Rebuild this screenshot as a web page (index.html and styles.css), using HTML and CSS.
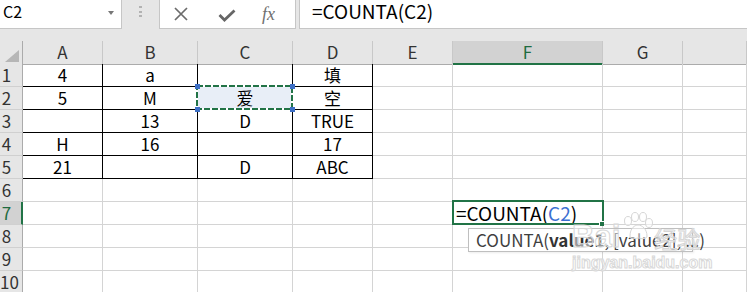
FILE: index.html
```html
<!DOCTYPE html>
<html lang="zh-CN">
<head>
    <meta charset="UTF-8">
    <title>COUNTA</title>
    <link rel="stylesheet" href="styles.css">
</head>
<body>
    <!-- formula bar -->
    <div class="formula-bar">
        <div class="name-box"><span>C2</span><span class="caret"></span></div>
        <div class="grip"><i></i><i></i><i></i></div>
        <div class="buttons">
            <svg class="btn-cancel" width="16" height="14" viewBox="0 0 16 14"><path d="M2 1 L14 13 M14 1 L2 13" stroke="#6b6b6b" stroke-width="1.7" fill="none"/></svg>
            <svg class="btn-enter" width="18" height="13" viewBox="0 0 18 13"><path d="M1.5 6 L6.5 11 L16.5 1.5" stroke="#666" stroke-width="2.8" fill="none"/></svg>
            <span class="fx">fx</span>
        </div>
        <div class="input">=COUNTA(C2)</div>
    </div>

    <!-- sheet -->
    <div class="sheet">
        <div class="row">
            <div class="corner"><span class="tri"></span></div>
            <div class="ch">A</div>
            <div class="ch">B</div>
            <div class="ch">C</div>
            <div class="ch">D</div>
            <div class="ch">E</div>
            <div class="ch sel">F</div>
            <div class="ch">G</div>
            <div class="ch"></div>
        </div>
        <div class="row">
            <div class="rh">1</div>
            <div class="cell blk">4</div>
            <div class="cell blk">a</div>
            <div class="cell blk"></div>
            <div class="cell blk">填</div>
            <div class="cell"></div><div class="cell"></div><div class="cell"></div><div class="cell"></div>
        </div>
        <div class="row">
            <div class="rh">2</div>
            <div class="cell blk">5</div>
            <div class="cell blk">M</div>
            <div class="cell blk ref">爱
                <svg class="marquee" width="98" height="26" viewBox="0 0 98 26">
                    <rect x="1" y="1" width="95" height="23" fill="none" stroke="#fff" stroke-width="2"/>
                    <rect x="1" y="1" width="95" height="23" fill="none" stroke="#217346" stroke-width="2" stroke-dasharray="6 2"/>
                    <rect x="-1" y="-1" width="5" height="5" fill="#3d6fc5"/>
                    <rect x="94" y="-1" width="5" height="5" fill="#3d6fc5"/>
                    <rect x="-1" y="22" width="5" height="5" fill="#3d6fc5"/>
                    <rect x="94" y="22" width="5" height="5" fill="#3d6fc5"/>
                </svg>
            </div>
            <div class="cell blk">空</div>
            <div class="cell"></div><div class="cell"></div><div class="cell"></div><div class="cell"></div>
        </div>
        <div class="row">
            <div class="rh">3</div>
            <div class="cell blk"></div>
            <div class="cell blk">13</div>
            <div class="cell blk">D</div>
            <div class="cell blk">TRUE</div>
            <div class="cell"></div><div class="cell"></div><div class="cell"></div><div class="cell"></div>
        </div>
        <div class="row">
            <div class="rh">4</div>
            <div class="cell blk">H</div>
            <div class="cell blk">16</div>
            <div class="cell blk"></div>
            <div class="cell blk">17</div>
            <div class="cell"></div><div class="cell"></div><div class="cell"></div><div class="cell"></div>
        </div>
        <div class="row">
            <div class="rh">5</div>
            <div class="cell blk">21</div>
            <div class="cell blk"></div>
            <div class="cell blk">D</div>
            <div class="cell blk">ABC</div>
            <div class="cell"></div><div class="cell"></div><div class="cell"></div><div class="cell"></div>
        </div>
        <div class="row">
            <div class="rh">6</div>
            <div class="cell"></div><div class="cell"></div><div class="cell"></div><div class="cell"></div>
            <div class="cell"></div><div class="cell"></div><div class="cell"></div><div class="cell"></div>
        </div>
        <div class="row">
            <div class="rh sel">7</div>
            <div class="cell"></div><div class="cell"></div><div class="cell"></div><div class="cell"></div>
            <div class="cell"></div>
            <div class="cell active">=COUNTA(<span class="ref-text">C2</span>)
                <div class="frame"></div>
                <div class="handle"></div>
                <div class="tooltip">COUNTA(<b>value1</b>, [value2], ...)</div>
            </div>
            <div class="cell"></div><div class="cell"></div>
        </div>
        <div class="row">
            <div class="rh">8</div>
            <div class="cell"></div><div class="cell"></div><div class="cell"></div><div class="cell"></div>
            <div class="cell"></div><div class="cell"></div><div class="cell"></div><div class="cell"></div>
        </div>
        <div class="row">
            <div class="rh">9</div>
            <div class="cell"></div><div class="cell"></div><div class="cell"></div><div class="cell"></div>
            <div class="cell"></div><div class="cell"></div><div class="cell"></div><div class="cell"></div>
        </div>
        <div class="row">
            <div class="rh">10</div>
            <div class="cell"></div><div class="cell"></div><div class="cell"></div><div class="cell"></div>
            <div class="cell"></div><div class="cell"></div><div class="cell"></div><div class="cell"></div>
        </div>
    </div>

    <!-- watermark over the sheet -->
    <div class="watermark">
        <div class="wm-top">
            <span class="wm-bai">Bai</span>
            <svg class="wm-paw" width="34" height="28" viewBox="0 0 34 28">
                <ellipse cx="8" cy="9" rx="3.5" ry="4.5"/>
                <ellipse cx="15" cy="5" rx="3.5" ry="4.5"/>
                <ellipse cx="23" cy="5" rx="3.5" ry="4.5"/>
                <ellipse cx="29" cy="11" rx="3.5" ry="4.5"/>
                <path d="M10 24 C10 16 15 13 18 13 C22 13 27 17 27 24 C27 27 22 27 18 26 C14 27 10 27 10 24 Z"/>
            </svg>
            <span class="wm-cn">经验</span>
        </div>
        <div class="wm-url">jingyan.baidu.com</div>
    </div>
</body>
</html>
```

FILE: styles.css
```css
body {
    margin: 0;
    width: 747px;
    height: 292px;
    overflow: hidden;
    position: relative;
    background-color: #ffffff;
    font-family: "Noto Sans CJK SC", "Noto Sans", sans-serif;
    color: #000;
}

/* formula bar */
.formula-bar {
    display: flex;
    align-items: flex-start;
    height: 41px;
    background-color: #e6e6e6;
}

.name-box {
    width: 122px;
    height: 29px;
    box-sizing: border-box;
    display: flex;
    justify-content: space-between;
    padding: 0 7px 0 3px;
    background-color: #fff;
    border-right: 1px solid #c6c6c6;
    border-bottom: 1px solid #c6c6c6;
    font-size: 16px;
    line-height: 22px;
}

.caret {
    width: 0;
    height: 0;
    margin-top: 11px;
    border-left: 3.5px solid transparent;
    border-right: 3.5px solid transparent;
    border-top: 4px solid #777;
}

.grip {
    width: 37px;
    display: flex;
    flex-direction: column;
    align-items: center;
    gap: 2.5px;
    padding-top: 6px;
}

.grip i {
    width: 3px;
    height: 2px;
    background-color: #b2b2b2;
}

.buttons {
    width: 137px;
    height: 29px;
    box-sizing: border-box;
    display: flex;
    align-items: center;
    background-color: #fff;
    border-left: 1px solid #c6c6c6;
    border-right: 1px solid #c6c6c6;
    border-bottom: 1px solid #c6c6c6;
}

.btn-cancel {
    margin-left: 13px;
}

.btn-enter {
    margin-left: 29px;
    margin-top: 2px;
}

.fx {
    margin-left: 26px;
    font-family: "Liberation Serif", serif;
    font-style: italic;
    font-size: 18px;
    color: #707070;
}

.input {
    flex: 1;
    height: 29px;
    box-sizing: border-box;
    margin-left: 3px;
    padding-left: 12px;
    background-color: #fff;
    border-left: 1px solid #c6c6c6;
    border-bottom: 1px solid #c6c6c6;
    font-size: 19px;
    line-height: 22px;
}

/* sheet grid */
.row {
    display: grid;
    grid-template-columns: 23px 80px 95px 95px 80px 80px 150px 80px 1fr;
    height: 23px;
}

.row > div {
    box-sizing: border-box;
}

.corner {
    display: flex;
    justify-content: flex-end;
    align-items: flex-end;
    padding: 0 3px 2px 0;
    background-color: #e6e6e6;
    border-right: 1px solid #ababab;
    border-bottom: 1px solid #ababab;
}

.tri {
    width: 0;
    height: 0;
    border-left: 14px solid transparent;
    border-bottom: 12px solid #b6b6b6;
}

.ch {
    background-color: #e6e6e6;
    border-right: 1px solid #c8c8c8;
    border-bottom: 1px solid #ababab;
    text-align: center;
    font-size: 17px;
    line-height: 22px;
    color: #333;
}

.ch.sel {
    background-color: #d2d2d2;
    border-bottom: 2px solid #217346;
    color: #1f6b40;
}

.rh {
    padding-right: 9px;
    background-color: #e6e6e6;
    border-right: 1px solid #ababab;
    border-bottom: 1px solid #d0d0d0;
    text-align: center;
    font-size: 17px;
    line-height: 22px;
    color: #333;
}

.rh.sel {
    padding-right: 8px;
    background-color: #d2d2d2;
    border-right: 2px solid #217346;
    color: #1f6b40;
}

.cell {
    border-right: 1px solid #d4d4d4;
    border-bottom: 1px solid #d4d4d4;
    text-align: center;
    white-space: nowrap;
    font-size: 17px;
    line-height: 22px;
}

.cell.blk {
    border-right-color: #000;
    border-bottom-color: #000;
}

/* referenced cell C2 */
.ref {
    position: relative;
    background-color: #e8eef7;
}

.marquee {
    position: absolute;
    left: -2px;
    top: -2px;
    overflow: visible;
}

/* cell being edited */
.active {
    position: relative;
    padding-left: 3px;
    text-align: left;
    font-size: 19px;
}

.ref-text {
    color: #3b6fd1;
}

.frame {
    position: absolute;
    left: -1px;
    top: -2px;
    right: -2px;
    bottom: -1px;
    border: 2px solid #217346;
}

.handle {
    position: absolute;
    right: -2px;
    bottom: -2px;
    width: 4px;
    height: 4px;
    background-color: #217346;
    border-left: 1px solid #fff;
    border-top: 1px solid #fff;
}

.tooltip {
    position: absolute;
    left: 15px;
    top: 26px;
    width: 225px;
    height: 24px;
    box-sizing: border-box;
    padding-left: 7px;
    background-color: #fff;
    border: 1px solid #bfbfbf;
    box-shadow: 1px 1px 2px rgba(0, 0, 0, 0.08);
    font-size: 17px;
    line-height: 22px;
    color: #404040;
    z-index: 3;
}

.tooltip b {
    color: #333;
}

/* watermark */
.watermark {
    position: absolute;
    left: 572px;
    top: 208px;
    z-index: 5;
    pointer-events: none;
}

.wm-top {
    display: flex;
    align-items: flex-end;
    height: 46px;
}

.wm-bai {
    font-family: "Liberation Sans", sans-serif;
    font-weight: bold;
    font-size: 31px;
    line-height: 34px;
    color: rgba(255, 255, 255, 0.5);
    -webkit-text-stroke: 1px #d6d6d6;
}

.wm-paw {
    align-self: flex-start;
    margin-top: 4px;
    fill: rgba(255, 255, 255, 0.5);
    stroke: #d6d6d6;
    stroke-width: 1;
}

.wm-cn {
    font-size: 23px;
    line-height: 32px;
    color: rgba(255, 255, 255, 0.5);
    -webkit-text-stroke: 1px #d6d6d6;
}

.wm-url {
    font-family: "Liberation Sans", sans-serif;
    font-weight: bold;
    font-size: 16px;
    line-height: 18px;
    color: rgba(255, 255, 255, 0.5);
    -webkit-text-stroke: 1px #d8d8d8;
}
```
